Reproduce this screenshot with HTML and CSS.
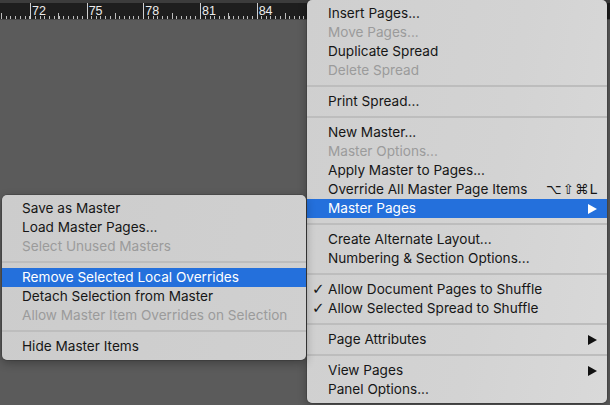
FILE: index.html
```html
<!DOCTYPE html>
<html>
<head>
<meta charset="utf-8">
<link rel="stylesheet" href="styles.css">
</head>
<body>
<div class="screen">
  <div class="ruler">
    <div class="seg seg-first"></div>
    <div class="seg"><span>72</span></div>
    <div class="seg"><span>75</span></div>
    <div class="seg"><span>78</span></div>
    <div class="seg"><span>81</span></div>
    <div class="seg"><span>84</span></div>
    <div class="seg"><span>87</span></div>
  </div>
  <div class="canvas"></div>

  <div class="menu main-menu">
    <div class="item">Insert Pages...</div>
    <div class="item disabled">Move Pages...</div>
    <div class="item">Duplicate Spread</div>
    <div class="item disabled">Delete Spread</div>
    <div class="sep"></div>
    <div class="item">Print Spread...</div>
    <div class="sep"></div>
    <div class="item">New Master...</div>
    <div class="item disabled">Master Options...</div>
    <div class="item">Apply Master to Pages...</div>
    <div class="item"><span class="label">Override All Master Page Items</span><span class="shortcut">⌥⇧⌘L</span></div>
    <div class="item active"><span class="label">Master Pages</span><span class="arrow"></span></div>
    <div class="sep"></div>
    <div class="item">Create Alternate Layout...</div>
    <div class="item">Numbering &amp; Section Options...</div>
    <div class="sep"></div>
    <div class="item checked">Allow Document Pages to Shuffle</div>
    <div class="item checked">Allow Selected Spread to Shuffle</div>
    <div class="sep"></div>
    <div class="item"><span class="label">Page Attributes</span><span class="arrow"></span></div>
    <div class="sep"></div>
    <div class="item"><span class="label">View Pages</span><span class="arrow"></span></div>
    <div class="item">Panel Options...</div>
  </div>

  <div class="menu sub-menu">
    <div class="item">Save as Master</div>
    <div class="item">Load Master Pages...</div>
    <div class="item disabled">Select Unused Masters</div>
    <div class="sep"></div>
    <div class="item active">Remove Selected Local Overrides</div>
    <div class="item">Detach Selection from Master</div>
    <div class="item disabled">Allow Master Item Overrides on Selection</div>
    <div class="sep"></div>
    <div class="item">Hide Master Items</div>
  </div>
</div>
</body>
</html>
```

FILE: styles.css
```css
* { box-sizing: border-box; }
html, body { margin: 0; padding: 0; }
body {
  width: 610px;
  height: 405px;
  overflow: hidden;
  background: #5b5b5b;
  font-family: "Inter", "Noto Sans", "Liberation Sans", sans-serif;
}
.screen {
  position: relative;
  width: 610px;
  height: 405px;
  display: flex;
  flex-direction: column;
}
.ruler {
  height: 20px;
  flex: none;
  display: flex;
  background: #1e1e1e;
  border-top: 3px solid #3c3c3c;
  border-bottom: 1px solid #474747;
  overflow: hidden;
}
.seg {
  flex: none;
  width: 56.67px;
  height: 100%;
  position: relative;
  border-left: 1px solid #cfcfcf;
  background-image:
    repeating-linear-gradient(to right, #bdbdbd 0 1px, transparent 1px 4.72px);
  background-size: 100% 3px;
  background-position: 3.7px 100%;
  background-repeat: no-repeat;
}
.seg::after {
  content: "";
  position: absolute;
  left: 27.3px;
  bottom: 0;
  width: 1px;
  height: 6px;
  background: #bdbdbd;
}
.seg-first {
  width: 30px;
  border-left: none;
  background-position: 1px 100%;
}
.seg-first::after { left: 1px; }
.seg span {
  position: absolute;
  left: 1px;
  top: 1px;
  color: #ececec;
  font-family: "Liberation Sans", sans-serif;
  font-size: 12.5px;
  line-height: 14px;
}
.canvas { flex: 1; background: #5b5b5b; }

.menu {
  position: absolute;
  background: linear-gradient(100deg, #cfcfcf 0%, #d3d3d3 60%, #d9d9d9 100%);
  border-radius: 5px;
  padding: 4px 0;
  box-shadow: 0 0 0 0.5px rgba(0,0,0,0.25), 0 3px 10px rgba(0,0,0,0.3);
  color: #161616;
  font-size: 13.6px;
}
.main-menu {
  left: 307px;
  top: 0;
  width: 300px;
}
.sub-menu {
  left: 2px;
  top: 195px;
  width: 304px;
  background: linear-gradient(100deg, #cccccc 0%, #d0d0d0 100%);
}
.item {
  height: 19px;
  line-height: 19px;
  padding: 0 9px 0 21px;
  display: flex;
  align-items: center;
  position: relative;
  white-space: nowrap;
}
.sub-menu .item { padding-left: 20px; }
.item .label { flex: 1; }
.item.disabled { color: #9b9b9b; }
.item.active { background: #2470dc; color: #ffffff; }
.item.checked::before {
  content: "✓";
  position: absolute;
  left: 5px;
  top: 0;
  font-family: "DejaVu Sans", sans-serif;
  font-size: 15px;
  font-weight: bold;
}
.shortcut {
  font-family: "DejaVu Sans", sans-serif;
  font-size: 13.5px;
  letter-spacing: 1px;
}
.arrow {
  width: 0;
  height: 0;
  border-top: 5px solid transparent;
  border-bottom: 5px solid transparent;
  border-left: 9px solid #111;
  margin-right: 1px;
}
.item.active .arrow { border-left-color: #ffffff; }
.sep {
  height: 12px;
  display: flex;
  align-items: center;
}
.sep::before {
  content: "";
  flex: 1;
  height: 2px;
  background: #bdbdbd;
}
```
